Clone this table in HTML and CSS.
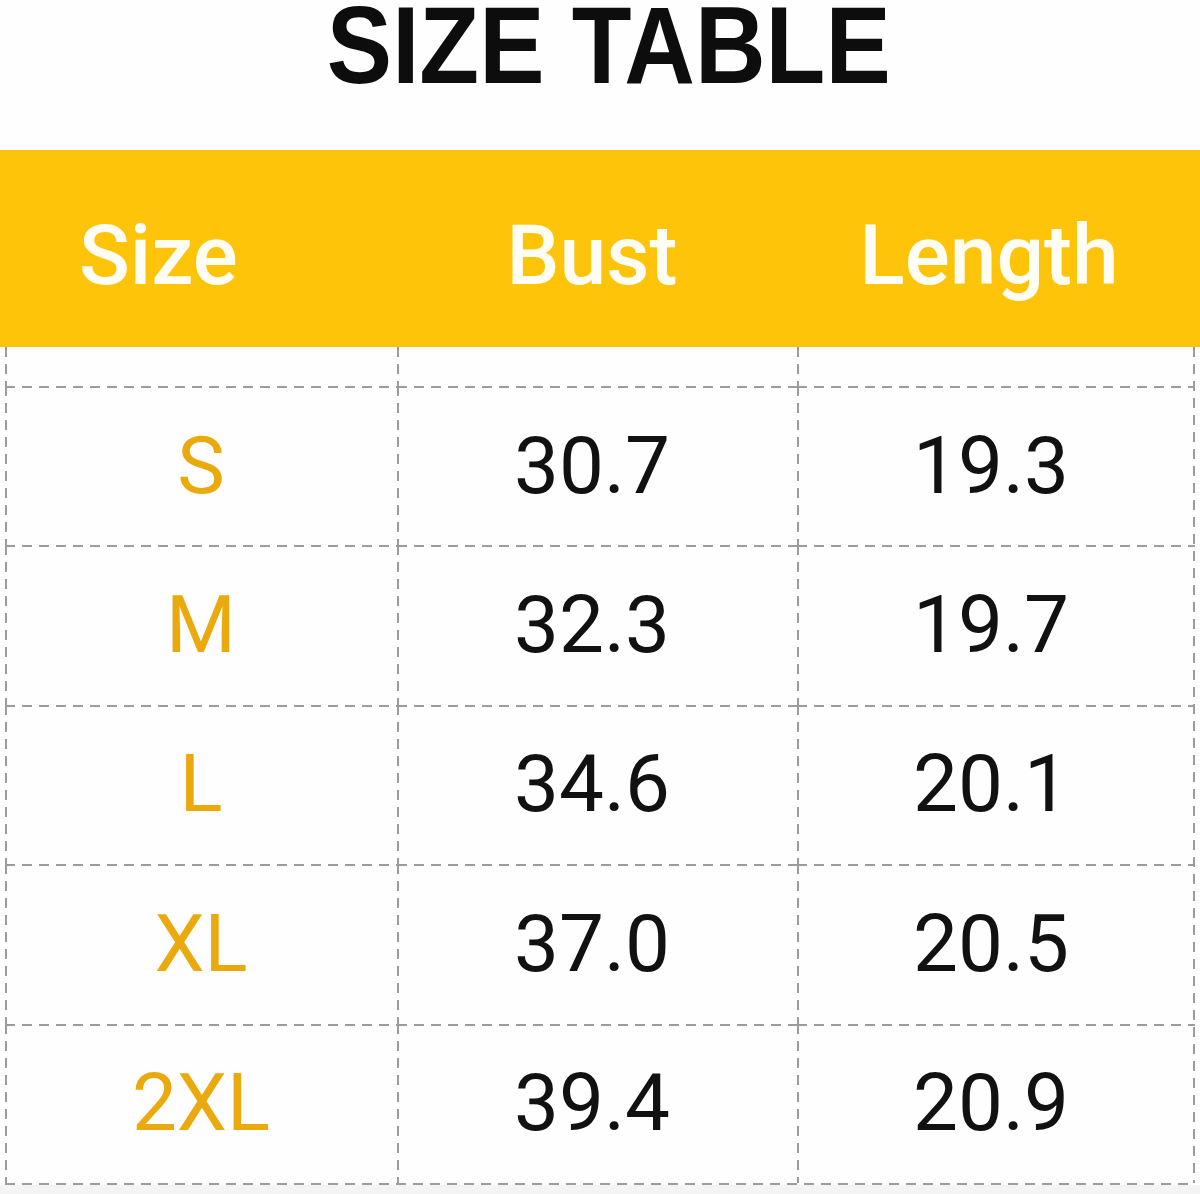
FILE: index.html
```html
<!DOCTYPE html>
<html lang="en">
<head>
<meta charset="utf-8">
<title>Size Table</title>
<link rel="stylesheet" href="styles.css">
</head>
<body>
<div class="page">
  <header class="title-wrap"><h1 class="title">SIZE TABLE</h1></header>
  <div class="head-bar">
    <div class="head-cell head-size">Size</div>
    <div class="head-cell head-bust">Bust</div>
    <div class="head-cell head-length">Length</div>
  </div>
  <div class="grid">
    <div class="gap-cell"></div><div class="gap-cell"></div><div class="gap-cell"></div>

    <div class="cell size">S</div><div class="cell num">30.7</div><div class="cell num">19.3</div>
    <div class="cell size">M</div><div class="cell num">32.3</div><div class="cell num">19.7</div>
    <div class="cell size">L</div><div class="cell num">34.6</div><div class="cell num">20.1</div>
    <div class="cell size">XL</div><div class="cell num">37.0</div><div class="cell num">20.5</div>
    <div class="cell size">2XL</div><div class="cell num">39.4</div><div class="cell num">20.9</div>
  </div>
  <div class="foot"></div>
</div>
</body>
</html>
```

FILE: styles.css
```css
* { box-sizing: border-box; }

html, body {
  margin: 0;
  padding: 0;
  background: #fefefe;
}

.page {
  width: 1200px;
  height: 1194px;
  overflow: hidden;
  font-family: Roboto, "Liberation Sans", sans-serif;
}

.title-wrap {
  height: 150px;
  display: flex;
  justify-content: center;
  padding-left: 17px;
}

.title {
  margin: 0;
  font-family: "Liberation Sans", Arial, sans-serif;
  font-weight: 700;
  font-size: 110px;
  line-height: 90px;
  color: #0d0d0d;
  display: inline-block;
  transform: scaleX(0.89);
  transform-origin: center top;
  white-space: nowrap;
}

.head-bar {
  height: 197px;
  background: #fdc40a;
  display: grid;
  grid-template-columns: 397px 400px 1fr;
  padding-top: 64px;
}

.head-cell {
  color: #fffdf4;
  font-size: 84px;
  font-weight: 500;
  line-height: 84px;
  white-space: nowrap;
}

.head-size { padding-left: 79px; text-align: left; }
.head-bust { text-align: center; padding-right: 10px; }
.head-length { text-align: center; padding-right: 19px; }

.grid {
  --dash: #9c9c9c;
  --h: repeating-linear-gradient(90deg, var(--dash) 0 10px, transparent 10px 17px);
  --v: repeating-linear-gradient(180deg, var(--dash) 0 10px, transparent 10px 17px);
  margin: 0 5px 0 5px;
  width: 1190px;
  display: grid;
  grid-template-columns: 392px 400px 398px;
  grid-template-rows: 39px repeat(5, 159.4px);
  padding-right: 2px;
  padding-bottom: 2px;
  background-image: var(--v), var(--h);
  background-size: 2px calc(100% - 2px), 100% 2px;
  background-position: right top, left bottom;
  background-repeat: no-repeat;
}

.gap-cell {
  background-image: var(--v);
  background-size: 2px 100%;
  background-position: left top;
  background-repeat: no-repeat;
}

.cell {
  display: flex;
  align-items: center;
  justify-content: center;
  font-size: 80px;
  line-height: 80px;
  background-image: var(--h), var(--v);
  background-size: 100% 2px, 2px 100%;
  background-position: left top, left top;
  background-repeat: no-repeat;
}

.size {
  color: #eaaa0d;
  font-weight: 400;
}

.num {
  color: #111111;
  font-weight: 400;
  padding-right: 10px;
}

.foot {
  height: 20px;
  background: #f4f4f4;
}
```
